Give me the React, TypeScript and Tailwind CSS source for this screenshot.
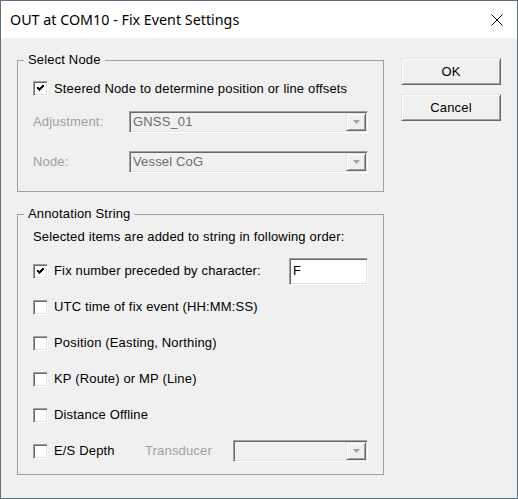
import React from "react";

const sunken =
  "border border-t-[#a0a0a0] border-l-[#a0a0a0] border-r-white border-b-white shadow-[inset_1px_1px_0_#696969,inset_-1px_-1px_0_#e3e3e3]";
const raised =
  "border border-t-[#e3e3e3] border-l-[#e3e3e3] border-r-[#696969] border-b-[#696969] shadow-[inset_1px_1px_0_#ffffff,inset_-1px_-1px_0_#a0a0a0]";

function CheckBox({ checked = false }: { checked?: boolean }) {
  return (
    <span className={`flex h-[15px] w-[15px] shrink-0 items-center justify-center bg-white ${sunken}`}>
      {checked && (
        <svg width="9" height="9" viewBox="0 0 9 9" shapeRendering="crispEdges">
          <path d="M1.5 3.5 L3.5 5.5 L7.5 1.5" stroke="#000" strokeWidth="2" fill="none" />
        </svg>
      )}
    </span>
  );
}

function Combo({ value = "", className = "" }: { value?: string; className?: string }) {
  return (
    <div className={`flex h-[22px] items-center bg-[#f0f0f0] ${sunken} ${className}`}>
      <span className="flex-1 pl-[3px] text-[#6d6d6d]">{value}</span>
      <span className={`mr-px flex h-[18px] w-[20px] items-center justify-center bg-[#f0f0f0] ${raised}`}>
        <svg width="7" height="4" viewBox="0 0 7 4">
          <path d="M0 0h7L3.5 4z" fill="#a0a0a0" />
        </svg>
      </span>
    </div>
  );
}

function CheckRow({ label, checked, children }: { label: string; checked?: boolean; children?: React.ReactNode }) {
  return (
    <div className="flex h-[36px] items-center">
      <CheckBox checked={checked} />
      <span className="ml-[6px]">{label}</span>
      {children}
    </div>
  );
}

export default function App() {
  return (
    <div className="flex h-[499px] w-[518px] flex-col border border-[#5f6f7f] bg-[#f0f0f0] font-['Liberation_Sans',Arial,sans-serif] text-black">
      {/* title bar */}
      <div className="flex h-[37px] shrink-0 items-center justify-between bg-white pl-[9px] pr-[14px]">
        <span className="font-['Noto_Sans',sans-serif] text-[14.3px]">OUT at COM10 - Fix Event Settings</span>
        <svg width="12" height="12" viewBox="0 0 12 12">
          <path d="M0.5 0.5 L11.5 11.5 M11.5 0.5 L0.5 11.5" stroke="#000" strokeWidth="1" />
        </svg>
      </div>

      <div className="flex flex-1 pl-[16px] text-[13px] leading-[16px] tracking-[0.16px]">
        <div className="flex w-[367px] flex-col">
          {/* Select Node */}
          <fieldset className="mt-[14px] border border-[#a0a0a0]">
            <legend className="ml-[6px] px-[4px]">Select Node</legend>
            <div className="px-[15px] pt-[13px] pb-[18px]">
              <div className="flex h-[15px] items-center">
                <CheckBox checked />
                <span className="ml-[6px]">Steered Node to determine position or line offsets</span>
              </div>
              <div className="mt-[15px] flex items-center">
                <span className="w-[96px] text-[#a0a0a0]">Adjustment:</span>
                <Combo value="GNSS_01" className="flex-1" />
              </div>
              <div className="mt-[18px] flex items-center">
                <span className="w-[96px] text-[#a0a0a0]">Node:</span>
                <Combo value="Vessel CoG" className="flex-1" />
              </div>
            </div>
          </fieldset>

          {/* Annotation String */}
          <fieldset className="mt-[14px] border border-[#a0a0a0]">
            <legend className="ml-[6px] px-[4px]">Annotation String</legend>
            <div className="px-[15px] pt-[7px] pb-[5px]">
              <div>Selected items are added to string in following order:</div>
              <div className="mt-[8px] flex flex-col">
                <CheckRow label="Fix number preceded by character:" checked>
                  <div className={`ml-auto flex h-[27px] w-[79px] items-center bg-white pl-[3px] ${sunken}`}>F</div>
                </CheckRow>
                <CheckRow label="UTC time of fix event (HH:MM:SS)" />
                <CheckRow label="Position (Easting, Northing)" />
                <CheckRow label="KP (Route) or MP (Line)" />
                <CheckRow label="Distance Offline" />
                <CheckRow label="E/S Depth">
                  <span className="ml-auto w-[88px] text-[#a0a0a0]">Transducer</span>
                  <Combo className="w-[135px]" />
                </CheckRow>
              </div>
            </div>
          </fieldset>
        </div>

        {/* buttons */}
        <div className="ml-[17px] flex w-[100px] flex-col gap-[9px] pt-[20px]">
          <button className={`h-[27px] bg-[#f0f0f0] ${raised}`}>OK</button>
          <button className={`h-[27px] bg-[#f0f0f0] ${raised}`}>Cancel</button>
        </div>
      </div>
    </div>
  );
}
